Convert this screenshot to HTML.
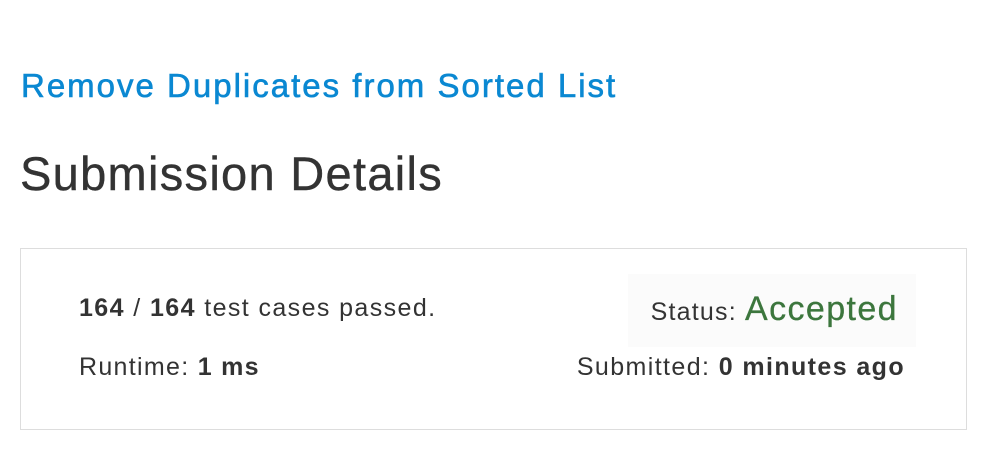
<!DOCTYPE html>
<html><head><style>
body{margin:0;width:988px;height:462px;background:#fff;font-family:"Liberation Sans",Arial,sans-serif;color:#333;position:relative;overflow:hidden}
.a{position:absolute;white-space:nowrap}
</style></head><body>
<div class="a" style="left:21px;top:67px;font-size:33px;letter-spacing:2px;color:#0a88d2;-webkit-text-stroke:0.6px #0a88d2;">Remove Duplicates from Sorted List</div>
<div class="a" style="left:20px;top:146px;font-size:47px;letter-spacing:1.3px;color:#333;-webkit-text-stroke:0.4px #333;">Submission Details</div>
<div class="a" style="left:20px;top:248px;width:945px;height:180px;border:1px solid #ddd;"></div>
<div class="a" style="left:628px;top:274px;width:288px;height:73px;background:#fbfbfb;"></div>
<div class="a" style="left:79px;top:294px;font-size:25px;letter-spacing:1.4px;"><b>164</b> / <b>164</b> test cases passed.</div>
<div class="a" style="left:79px;top:353px;font-size:25px;letter-spacing:1.3px;">Runtime: <b>1 ms</b></div>
<div class="a" style="right:90px;top:290px;font-size:25px;letter-spacing:1.2px;">Status: <span style="font-size:34px;letter-spacing:1.4px;color:#3c763d;-webkit-text-stroke:0.3px #3c763d;">Accepted</span></div>
<div class="a" style="right:83px;top:353px;font-size:25px;letter-spacing:1.4px;">Submitted: <b>0 minutes ago</b></div>
</body></html>
